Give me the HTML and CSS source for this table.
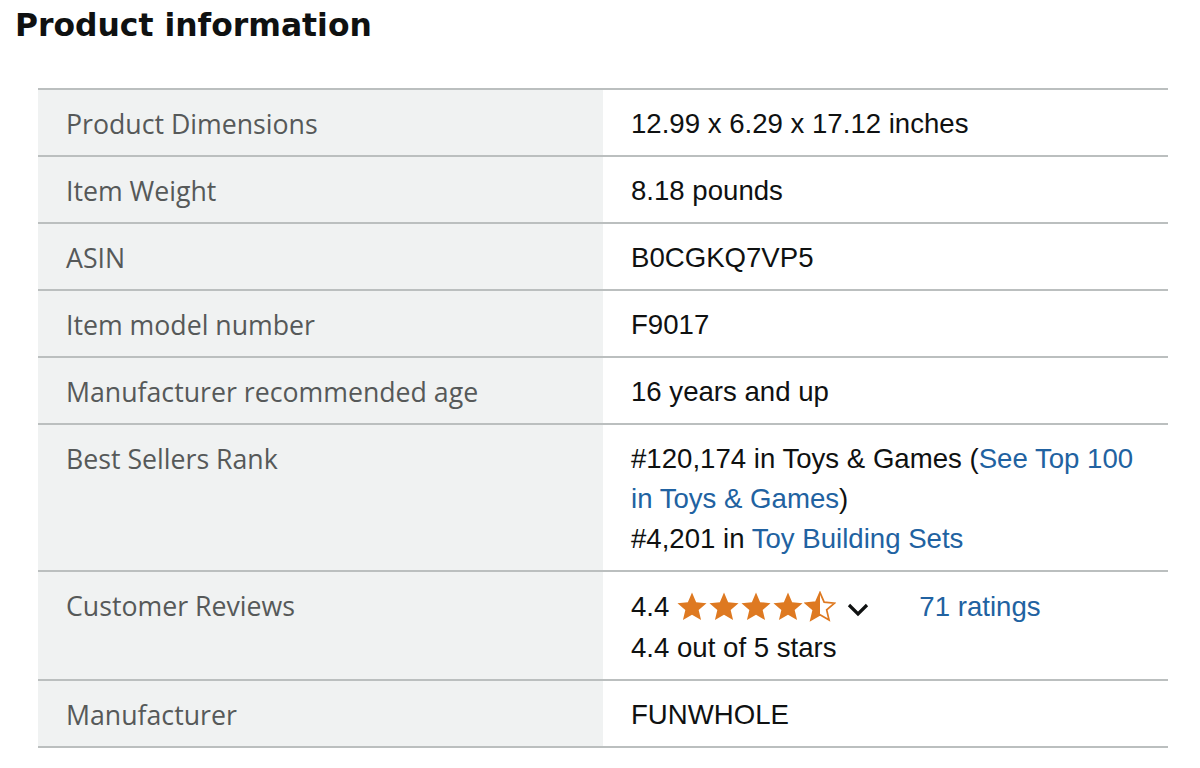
FILE: index.html
```html
<!DOCTYPE html>
<html>
<head>
<meta charset="utf-8">
<link rel="stylesheet" href="styles.css">
</head>
<body>
<h1 class="title">Product information</h1>
<table class="info">
  <colgroup><col class="c1"><col class="c2"></colgroup>
  <tr><th>Product Dimensions</th><td>12.99 x 6.29 x 17.12 inches</td></tr>
  <tr><th>Item Weight</th><td>8.18 pounds</td></tr>
  <tr><th>ASIN</th><td>B0CGKQ7VP5</td></tr>
  <tr><th>Item model number</th><td>F9017</td></tr>
  <tr><th>Manufacturer recommended age</th><td>16 years and up</td></tr>
  <tr><th>Best Sellers Rank</th><td>#120,174 in Toys &amp; Games (<a href="#">See Top 100 in Toys &amp; Games</a>)<br>#4,201 in <a href="#">Toy Building Sets</a></td></tr>
  <tr><th>Customer Reviews</th><td>
    <div class="rating">
      <span class="num">4.4</span>
      <span class="stars">
        <svg viewBox="0 0 24 24" class="star"><path d="M12 1.2l3.1 7.2 7.8.7-5.9 5.1 1.8 7.6L12 17.8 5.2 21.8 7 14.2 1.1 9.1l7.8-.7z" fill="#de7921"/></svg>
        <svg viewBox="0 0 24 24" class="star"><path d="M12 1.2l3.1 7.2 7.8.7-5.9 5.1 1.8 7.6L12 17.8 5.2 21.8 7 14.2 1.1 9.1l7.8-.7z" fill="#de7921"/></svg>
        <svg viewBox="0 0 24 24" class="star"><path d="M12 1.2l3.1 7.2 7.8.7-5.9 5.1 1.8 7.6L12 17.8 5.2 21.8 7 14.2 1.1 9.1l7.8-.7z" fill="#de7921"/></svg>
        <svg viewBox="0 0 24 24" class="star"><path d="M12 1.2l3.1 7.2 7.8.7-5.9 5.1 1.8 7.6L12 17.8 5.2 21.8 7 14.2 1.1 9.1l7.8-.7z" fill="#de7921"/></svg>
        <svg viewBox="0 0 24 24" class="star"><path d="M12 1.2l3.1 7.2 7.8.7-5.9 5.1 1.8 7.6L12 17.8 5.2 21.8 7 14.2 1.1 9.1l7.8-.7z" fill="none" stroke="#de7921" stroke-width="1.3"/><path d="M12 1.2L8.9 8.4l-7.8.7L7 14.2l-1.8 7.6L12 17.8z" fill="#de7921"/></svg>
      </span>
      <svg class="chev" viewBox="0 0 24 16"><path d="M3 4l9 9 9-9" fill="none" stroke="#0f1111" stroke-width="3.2"/></svg>
      <a href="#" class="count">71 ratings</a>
    </div>
    <div>4.4 out of 5 stars</div>
  </td></tr>
  <tr><th>Manufacturer</th><td>FUNWHOLE</td></tr>
</table>
</body>
</html>
```
FILE: styles.css
```css
html, body {
  margin: 0;
  padding: 0;
  background: #fff;
}
.title {
  font-family: "DejaVu Sans", Verdana, sans-serif;
  font-weight: bold;
  font-size: 31.4px;
  color: #0f1111;
  margin: 7px 0 0 15px;
  line-height: 36px;
}
.info {
  margin: 45px 0 0 38px;
  width: 1130px;
  border-collapse: collapse;
  table-layout: fixed;
  border-top: 2px solid #bbbfbf;
}
.c1, .c2 {
  width: 565px;
}
.info tr {
  border-bottom: 2px solid #bbbfbf;
}
.info th {
  background: #f0f2f2;
  text-align: left;
  font-weight: normal;
  font-family: "Open Sans", "Noto Sans", sans-serif;
  font-size: 26.7px;
  color: #565959;
  vertical-align: top;
  padding: 13.5px 28px 11.5px;
  line-height: 40px;
}
.info td {
  font-family: "Liberation Sans", Arial, sans-serif;
  font-size: 27.6px;
  color: #0f1111;
  vertical-align: top;
  padding: 13.5px 28px 11.5px;
  line-height: 40px;
}
.info a {
  color: #2162a1;
  text-decoration: none;
}
.rating {
  display: flex;
  align-items: center;
  height: 42px;
}
.num {
  margin-right: 7px;
}
.stars {
  display: flex;
  gap: 0;
}
.star {
  width: 32px;
  height: 32px;
  display: block;
}
.chev {
  width: 24px;
  height: 16px;
  margin-left: 10px;
  margin-top: 4px;
}
.count {
  margin-left: 49px;
}
```
